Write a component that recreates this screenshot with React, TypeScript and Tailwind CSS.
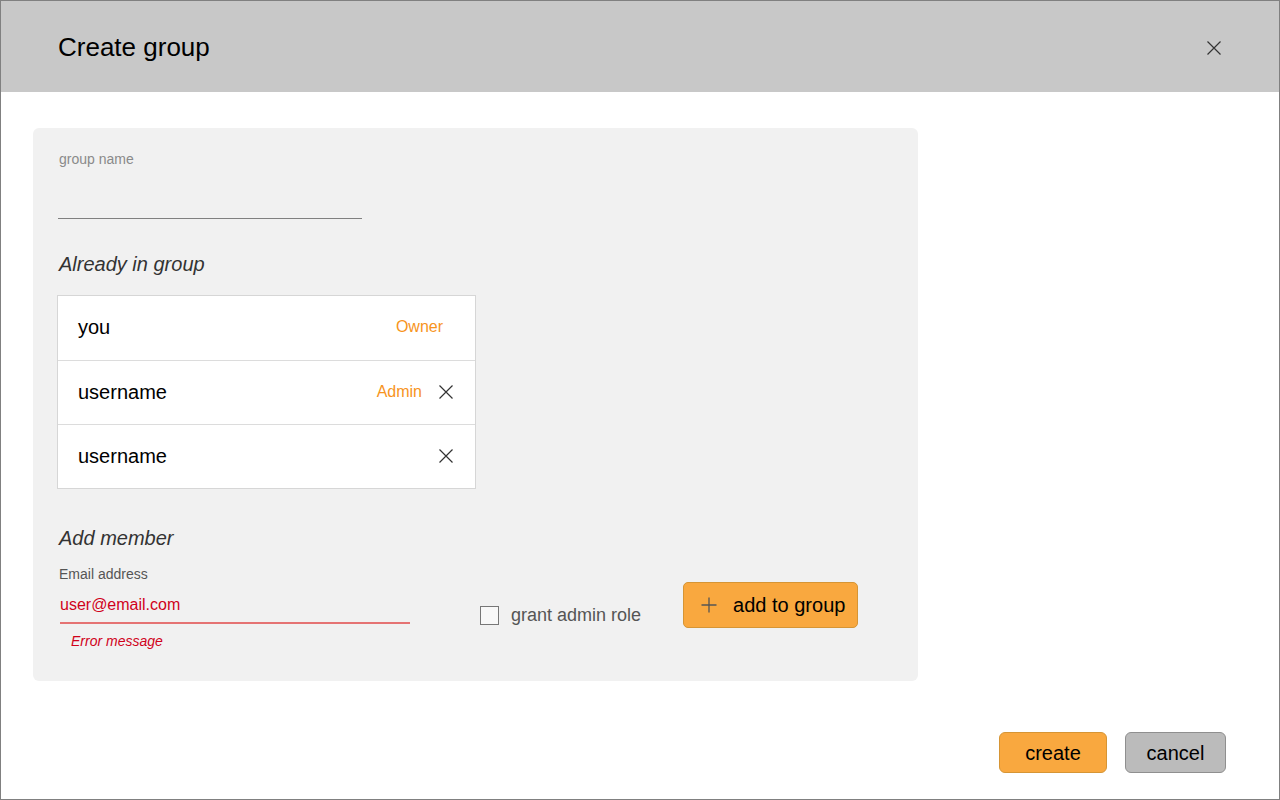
const members = [
  { name: 'you', role: 'Owner', removable: false },
  { name: 'username', role: 'Admin', removable: true },
  { name: 'username', role: '', removable: true },
];

function Cross({ className }: { className?: string }) {
  return (
    <svg viewBox="0 0 14 14" className={className} fill="none" stroke="currentColor" strokeWidth={1.2}>
      <path d="M0.5 0.5 L13.5 13.5 M13.5 0.5 L0.5 13.5" />
    </svg>
  );
}

function PlusIcon({ className }: { className?: string }) {
  return (
    <svg viewBox="0 0 16 16" className={className} fill="none" stroke="currentColor" strokeWidth={1.3}>
      <path d="M8 0.5 V15.5 M0.5 8 H15.5" />
    </svg>
  );
}

export default function App() {
  return (
    <div className="w-[1280px] h-[800px] border border-[#808080] bg-white flex flex-col font-['Liberation_Sans',Arial,sans-serif] text-black overflow-hidden">
      {/* Header */}
      <div className="h-[91px] shrink-0 bg-[#c8c8c8] flex items-center justify-between pl-[57px] pr-[58px]">
        <h1 className="text-[26px] leading-[30px]">Create group</h1>
        <Cross className="w-[14px] h-[14px] mt-[2px] text-[#333]" />
      </div>

      {/* Body panel */}
      <div className="ml-[32px] mt-[36px] w-[885px] h-[553px] bg-[#f1f1f1] rounded-md pl-[24px] pt-[23px] flex flex-col">
        <label className="pl-[2px] text-[14px] leading-[16px] text-[#8a8a8a]">group name</label>
        <div className="ml-[1px] w-[304px] h-[52px] border-b border-[#808080]" />

        <h2 className="mt-[33px] pl-[2px] text-[20px] leading-[24px] italic text-[#333]">Already in group</h2>

        <div className="mt-[19px] w-[419px] bg-white border border-[#d6d6d6]">
          {members.map((m, i) => (
            <div
              key={i}
              className={`h-[64px] flex items-center pb-[2px] pl-[20px] ${m.removable ? 'pr-[22px]' : 'pr-[32px]'} ${i > 0 ? 'border-t border-[#dcdcdc]' : ''}`}
            >
              <span className="text-[20px] leading-[24px] flex-1">{m.name}</span>
              {m.role && <span className="text-[16px] leading-[20px] text-[#f7941d]">{m.role}</span>}
              {m.removable && <Cross className="ml-[17px] w-[14px] h-[14px] text-[#333]" />}
            </div>
          ))}
        </div>

        <h2 className="mt-[37px] pl-[2px] text-[20px] leading-[24px] italic text-[#333]">Add member</h2>

        <div className="mt-[16px] flex items-start">
          <div className="w-[353px] pl-[3px]">
            <label className="block -ml-px text-[14px] leading-[17px] text-[#555]">Email address</label>
            <div className="mt-[12px] pb-[7px] border-b-2 border-[#e57373] text-[16px] leading-[20px] text-[#d0021b]">
              user@email.com
            </div>
            <p className="mt-[9px] pl-[11px] text-[14px] leading-[17px] italic text-[#d0021b]">Error message</p>
          </div>

          <div className="ml-[70px] mt-[39px] flex items-center">
            <div className="w-[19px] h-[19px] border border-[#777] bg-[#f8f8f8]" />
            <span className="ml-[12px] text-[18px] leading-[20px] text-[#555]">grant admin role</span>
          </div>

          <button className="ml-[42px] mt-[16px] w-[175px] h-[46px] rounded-[5px] bg-[#f9a83f] border border-[#d69535] flex items-center pl-[17px]">
            <PlusIcon className="w-[16px] h-[16px] text-[#555]" />
            <span className="ml-[16px] text-[20px] leading-[24px] text-black">add to group</span>
          </button>
        </div>
      </div>

      {/* Footer */}
      <div className="mt-[51px] flex justify-end gap-[18px] pr-[53px]">
        <button className="w-[108px] h-[41px] rounded-[6px] bg-[#f9a83f] border border-[#d69535] text-[20px] leading-[24px] text-black">
          create
        </button>
        <button className="w-[101px] h-[41px] rounded-[6px] bg-[#bbbbbb] border border-[#8f8f8f] text-[20px] leading-[24px] text-black">
          cancel
        </button>
      </div>
    </div>
  );
}
